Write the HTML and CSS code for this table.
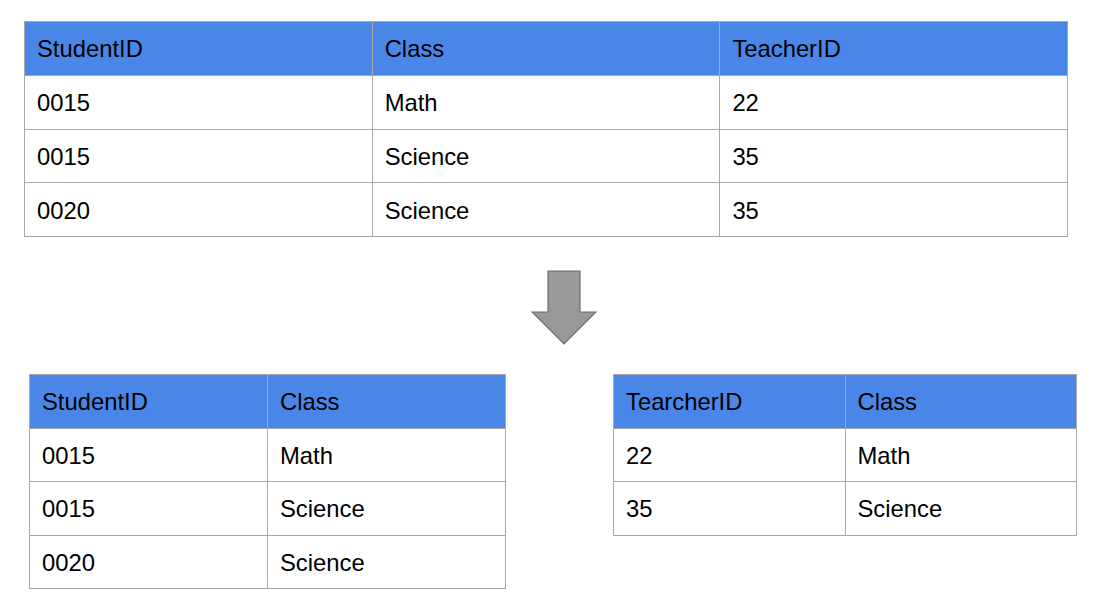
FILE: index.html
```html
<!DOCTYPE html>
<html>
<head>
<meta charset="utf-8">
<link rel="stylesheet" href="styles.css">
</head>
<body>
<div class="page">
  <table class="tbl tbl-top">
    <thead>
      <tr><th>StudentID</th><th>Class</th><th>TeacherID</th></tr>
    </thead>
    <tbody>
      <tr><td>0015</td><td>Math</td><td>22</td></tr>
      <tr><td>0015</td><td>Science</td><td>35</td></tr>
      <tr><td>0020</td><td>Science</td><td>35</td></tr>
    </tbody>
  </table>

  <div class="arrow-wrap">
    <svg class="arrow" width="66" height="76" viewBox="0 0 66 76">
      <polygon points="17,1 49,1 49,42 65,42 33,74 1,42 17,42" fill="#999999" stroke="#6b6b6b" stroke-width="1.2" stroke-linejoin="miter"/>
    </svg>
  </div>

  <div class="bottom">
    <table class="tbl tbl-left">
      <thead>
        <tr><th>StudentID</th><th>Class</th></tr>
      </thead>
      <tbody>
        <tr><td>0015</td><td>Math</td></tr>
        <tr><td>0015</td><td>Science</td></tr>
        <tr><td>0020</td><td>Science</td></tr>
      </tbody>
    </table>
    <table class="tbl tbl-right">
      <thead>
        <tr><th>TearcherID</th><th>Class</th></tr>
      </thead>
      <tbody>
        <tr><td>22</td><td>Math</td></tr>
        <tr><td>35</td><td>Science</td></tr>
      </tbody>
    </table>
  </div>
</div>
</body>
</html>
```

FILE: styles.css
```css
html, body {
  margin: 0;
  padding: 0;
  background: #ffffff;
}

.page {
  display: flex;
  flex-direction: column;
  padding: 21px 0 0 24px;
  font-family: "Liberation Sans", Arial, sans-serif;
  color: #000000;
}

.tbl {
  border-collapse: collapse;
  table-layout: fixed;
  font-size: 23.8px;
}

.tbl th,
.tbl td {
  border: 1px solid #a8a8a8;
  height: 53.75px;
  padding: 2px 0 0 12px;
  text-align: left;
  font-weight: normal;
  vertical-align: middle;
  box-sizing: border-box;
}

.tbl th {
  background: #4a86e8;
}

.tbl-top {
  width: 1043px;
}
.tbl-top th,
.tbl-top td {
  width: 347.7px;
}

.arrow-wrap {
  display: flex;
  padding: 33px 0 0 507px;
}

.arrow {
  display: block;
}

.bottom {
  display: flex;
  align-items: flex-start;
  gap: 107px;
  padding: 28px 0 0 5px;
}

.tbl-left {
  width: 476px;
}
.tbl-left th,
.tbl-left td {
  width: 238px;
  height: 53.5px;
}

.tbl-right {
  width: 463px;
}
.tbl-right th,
.tbl-right td {
  width: 231.5px;
  height: 53.5px;
}
```
